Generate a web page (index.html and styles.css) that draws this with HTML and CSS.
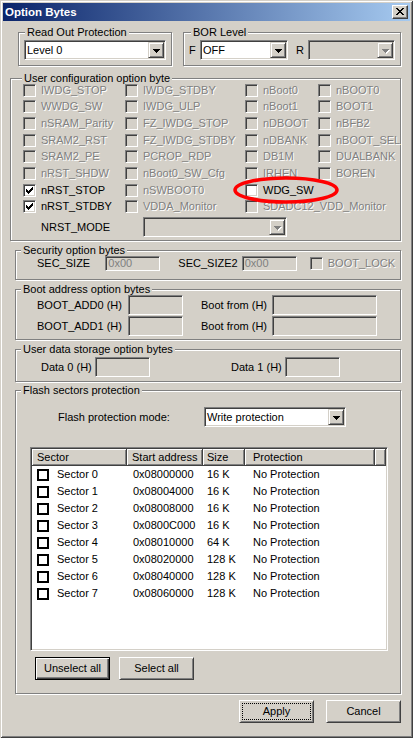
FILE: index.html
```html
<!DOCTYPE html>
<html>
<head>
<meta charset="utf-8">
<title>Option Bytes</title>
<link rel="stylesheet" href="styles.css">
</head>
<body>
<div class="window">
  <div class="titlebar">
    <span class="title">Option Bytes</span>
    <span class="close"><svg width="8" height="7" viewBox="0 0 8 7"><path d="M0 0h2v1H0zM6 0h2v1H6zM1 1h2v1H1zM5 1h2v1H5zM2 2h4v1H2zM3 3h2v1H3zM2 4h4v1H2zM1 5h2v1H1zM5 5h2v1H5zM0 6h2v1H0zM6 6h2v1H6z"/></svg></span>
  </div>
  <div class="content">
    <div class="row1">
      <fieldset class="group g-rop">
        <legend>Read Out Protection</legend>
        <div class="combo"><span class="val">Level 0</span><span class="dd"><svg width="7" height="4" viewBox="0 0 7 4"><path d="M0 0h7v1H0zM1 1h5v1H1zM2 2h3v1H2zM3 3h1v1H3z"/></svg></span></div>
      </fieldset>
      <fieldset class="group g-bor">
        <legend>BOR Level</legend>
        <div class="bor-row">
          <span class="lbl-f">F</span>
          <div class="combo w-f"><span class="val">OFF</span><span class="dd"><svg width="7" height="4" viewBox="0 0 7 4"><path d="M0 0h7v1H0zM1 1h5v1H1zM2 2h3v1H2zM3 3h1v1H3z"/></svg></span></div>
          <span class="lbl-r">R</span>
          <div class="combo w-r dis"><span class="val"></span><span class="dd"><svg width="8" height="5" viewBox="0 0 8 5"><path fill="#fff" d="M1 1h7v1H1zM2 2h5v1H2zM3 3h3v1H3zM4 4h1v1H4z"/><path fill="#808080" d="M0 0h7v1H0zM1 1h5v1H1zM2 2h3v1H2zM3 3h1v1H3z"/></svg></span></div>
        </div>
      </fieldset>
    </div>

    <fieldset class="group g-user">
      <legend>User configuration option byte</legend>
      <div class="opts">
        <div class="opt"><span class="cb dis"></span><span class="dt">IWDG_STOP</span></div>
        <div class="opt"><span class="cb dis"></span><span class="dt">IWDG_STDBY</span></div>
        <div class="opt"><span class="cb dis"></span><span class="dt">nBoot0</span></div>
        <div class="opt"><span class="cb dis"></span><span class="dt">nBOOT0</span></div>

        <div class="opt"><span class="cb dis"></span><span class="dt">WWDG_SW</span></div>
        <div class="opt"><span class="cb dis"></span><span class="dt">IWDG_ULP</span></div>
        <div class="opt"><span class="cb dis"></span><span class="dt">nBoot1</span></div>
        <div class="opt"><span class="cb dis"></span><span class="dt">BOOT1</span></div>

        <div class="opt"><span class="cb dis"></span><span class="dt">nSRAM_Parity</span></div>
        <div class="opt"><span class="cb dis"></span><span class="dt">FZ_IWDG_STOP</span></div>
        <div class="opt"><span class="cb dis"></span><span class="dt">nDBOOT</span></div>
        <div class="opt"><span class="cb dis"></span><span class="dt">nBFB2</span></div>

        <div class="opt"><span class="cb dis"></span><span class="dt">SRAM2_RST</span></div>
        <div class="opt"><span class="cb dis"></span><span class="dt">FZ_IWDG_STDBY</span></div>
        <div class="opt"><span class="cb dis"></span><span class="dt">nDBANK</span></div>
        <div class="opt"><span class="cb dis"></span><span class="dt">nBOOT_SEL</span></div>

        <div class="opt"><span class="cb dis"></span><span class="dt">SRAM2_PE</span></div>
        <div class="opt"><span class="cb dis"></span><span class="dt">PCROP_RDP</span></div>
        <div class="opt"><span class="cb dis"></span><span class="dt">DB1M</span></div>
        <div class="opt"><span class="cb dis"></span><span class="dt">DUALBANK</span></div>

        <div class="opt"><span class="cb dis"></span><span class="dt">nRST_SHDW</span></div>
        <div class="opt"><span class="cb dis"></span><span class="dt">nBoot0_SW_Cfg</span></div>
        <div class="opt"><span class="cb dis"></span><span class="dt">IRHEN</span></div>
        <div class="opt"><span class="cb dis"></span><span class="dt">BOREN</span></div>

        <div class="opt"><span class="cb"><svg width="7" height="7" viewBox="0 0 7 7"><path d="M6 0h1v1H6zM5 1h2v1H5zM0 2h1v1H0zM4 2h3v1H4zM0 3h2v1H0zM3 3h3v1H3zM0 4h5v1H0zM1 5h3v1H1zM2 6h1v1H2z"/></svg></span><span>nRST_STOP</span></div>
        <div class="opt"><span class="cb dis"></span><span class="dt">nSWBOOT0</span></div>
        <div class="opt annot"><span class="cb"></span><span>WDG_SW</span><svg class="ring" width="106" height="28" viewBox="0 0 106 28"><ellipse cx="53" cy="14" rx="51" ry="12" fill="none" stroke="#ff0000" stroke-width="3.5"/></svg></div>
        <div class="opt"></div>

        <div class="opt"><span class="cb"><svg width="7" height="7" viewBox="0 0 7 7"><path d="M6 0h1v1H6zM5 1h2v1H5zM0 2h1v1H0zM4 2h3v1H4zM0 3h2v1H0zM3 3h3v1H3zM0 4h5v1H0zM1 5h3v1H1zM2 6h1v1H2z"/></svg></span><span>nRST_STDBY</span></div>
        <div class="opt"><span class="cb dis"></span><span class="dt">VDDA_Monitor</span></div>
        <div class="opt"><span class="cb dis"></span><span class="dt">SDADC12_VDD_Monitor</span></div>
        <div class="opt"></div>
      </div>
      <div class="nrst">
        <span class="l-nrst">NRST_MODE</span>
        <div class="combo w-nrst dis"><span class="val"></span><span class="dd"><svg width="8" height="5" viewBox="0 0 8 5"><path fill="#fff" d="M1 1h7v1H1zM2 2h5v1H2zM3 3h3v1H3zM4 4h1v1H4z"/><path fill="#808080" d="M0 0h7v1H0zM1 1h5v1H1zM2 2h3v1H2zM3 3h1v1H3z"/></svg></span></div>
      </div>
    </fieldset>

    <fieldset class="group g-sec">
      <legend>Security option bytes</legend>
      <div class="sec-row">
        <span class="l-sec1">SEC_SIZE</span>
        <span class="edit sm">0x00</span>
        <span class="l-sec2">SEC_SIZE2</span>
        <span class="edit sm">0x00</span>
        <span class="cb dis bl"></span>
        <span class="dt">BOOT_LOCK</span>
      </div>
    </fieldset>

    <fieldset class="group g-boot">
      <legend>Boot address option bytes</legend>
      <div class="boot-rows">
        <div class="boot-row">
          <span class="l-boot">BOOT_ADD0 (H)</span>
          <span class="edit w55"></span>
          <span class="l-from">Boot from (H)</span>
          <span class="edit w105"></span>
        </div>
        <div class="boot-row">
          <span class="l-boot">BOOT_ADD1 (H)</span>
          <span class="edit w55"></span>
          <span class="l-from">Boot from (H)</span>
          <span class="edit w105"></span>
        </div>
      </div>
    </fieldset>

    <fieldset class="group g-data">
      <legend>User data storage option bytes</legend>
      <div class="data-row">
        <span class="l-d0">Data 0 (H)</span>
        <span class="edit w55"></span>
        <span class="l-d1">Data 1 (H)</span>
        <span class="edit w55"></span>
      </div>
    </fieldset>

    <fieldset class="group g-flash">
      <legend>Flash sectors protection</legend>
      <div class="mode-row">
        <span class="l-mode">Flash protection mode:</span>
        <div class="combo w-mode"><span class="val">Write protection</span><span class="dd"><svg width="7" height="4" viewBox="0 0 7 4"><path d="M0 0h7v1H0zM1 1h5v1H1zM2 2h3v1H2zM3 3h1v1H3z"/></svg></span></div>
      </div>
      <div class="list">
        <div class="lv-head">
          <span class="h1">Sector</span><span class="h2">Start address</span><span class="h3">Size</span><span class="h4">Protection</span><span class="h5"></span>
        </div>
        <div class="lv-row"><span class="c1"><span class="lcb"></span>Sector 0</span><span class="c2">0x08000000</span><span class="c3">16 K</span><span class="c4">No Protection</span></div>
        <div class="lv-row"><span class="c1"><span class="lcb"></span>Sector 1</span><span class="c2">0x08004000</span><span class="c3">16 K</span><span class="c4">No Protection</span></div>
        <div class="lv-row"><span class="c1"><span class="lcb"></span>Sector 2</span><span class="c2">0x08008000</span><span class="c3">16 K</span><span class="c4">No Protection</span></div>
        <div class="lv-row"><span class="c1"><span class="lcb"></span>Sector 3</span><span class="c2">0x0800C000</span><span class="c3">16 K</span><span class="c4">No Protection</span></div>
        <div class="lv-row"><span class="c1"><span class="lcb"></span>Sector 4</span><span class="c2">0x08010000</span><span class="c3">64 K</span><span class="c4">No Protection</span></div>
        <div class="lv-row"><span class="c1"><span class="lcb"></span>Sector 5</span><span class="c2">0x08020000</span><span class="c3">128 K</span><span class="c4">No Protection</span></div>
        <div class="lv-row"><span class="c1"><span class="lcb"></span>Sector 6</span><span class="c2">0x08040000</span><span class="c3">128 K</span><span class="c4">No Protection</span></div>
        <div class="lv-row"><span class="c1"><span class="lcb"></span>Sector 7</span><span class="c2">0x08060000</span><span class="c3">128 K</span><span class="c4">No Protection</span></div>
      </div>
      <div class="list-btns">
        <button class="btn default">Unselect all</button>
        <button class="btn">Select all</button>
      </div>
    </fieldset>

    <div class="footer">
      <button class="btn focus"><span class="fr">Apply</span></button>
      <button class="btn">Cancel</button>
    </div>
  </div>
</div>
</body>
</html>
```

FILE: styles.css
```css
* { box-sizing: border-box; }
html, body { margin: 0; padding: 0; }
body {
  width: 413px; height: 738px; overflow: hidden;
  background: #d4d0c8;
  font-family: "Liberation Sans", Arial, sans-serif;
  font-size: 11px; line-height: 13px; color: #000;
}
.window {
  width: 413px; height: 738px; padding: 3px;
  background: #d4d0c8;
  box-shadow: inset 1px 1px 0 #d4d0c8, inset -1px -1px 0 #404040, inset 2px 2px 0 #fff, inset -2px -2px 0 #808080;
  display: flex; flex-direction: column;
}
.titlebar {
  height: 18px; flex: none;
  display: flex; align-items: center; justify-content: space-between;
  padding: 0 2px;
  background: linear-gradient(to right, #0a246a, #a6caf0);
}
.title { color: #fff; font-weight: bold; font-size: 11.5px; line-height: 14px; }
.close {
  width: 16px; height: 14px; padding: 2px 0 0 3px;
  background: #d4d0c8;
  border: 1px solid; border-color: #fff #404040 #404040 #fff;
  box-shadow: inset -1px -1px 0 #808080;
}
.close svg { display: block; }
.content { flex: 1; display: flex; flex-direction: column; padding: 0 9px 0 7px; }

/* group boxes */
.group {
  margin: 0; padding: 0 5px; min-width: 0;
  border: 1px solid #808080;
  box-shadow: 1px 1px 0 #fff, inset 1px 1px 0 #fff;
}
.group > legend {
  padding: 0 2px; margin: 0; height: 13px; line-height: 13px;
  background: #d4d0c8; white-space: nowrap;
}
.row1 { display: flex; margin-top: 5px; }
.g-rop { margin-left: 8px; width: 154px; height: 40px; }
.g-rop > legend { margin-left: 1px; }
.g-rop .combo { margin-top: 1px; width: 142px; }
.g-bor { margin-left: 11px; width: 218px; height: 40px; }
.g-bor > legend { margin-left: 2px; }
.bor-row { display: flex; align-items: center; margin-top: 1px; }
.lbl-f { width: 11px; }
.lbl-r { width: 12px; margin-left: 8px; }
.w-f { width: 88px; }
.w-r { width: 87px; }

.g-user { margin-top: 6px; width: 391px; height: 169px; }
.g-user > legend { margin-left: 6px; }
.opts {
  display: grid;
  grid-template-columns: 102px 120px 73px 1fr;
  grid-template-rows: repeat(8, 16.667px);
  margin: -3px 0 0 7px;
}
.opt { display: flex; align-items: center; gap: 5px; white-space: nowrap; }
.annot { position: relative; }
.ring { position: absolute; left: -12px; top: -6px; }
.dt { color: #808080; text-shadow: 1px 1px 0 #fff; }
.nrst { display: flex; align-items: center; height: 20px; margin: 2px 0 0 7px; }
.l-nrst { width: 120px; padding-left: 18px; }
.w-nrst { width: 144px; }

.g-sec { margin: 3px 0 0 5px; width: 386px; height: 36px; }
.sec-row { display: flex; align-items: center; height: 15px; margin: -1px 0 0 16px; white-space: nowrap; }
.l-sec1 { width: 70px; }
.l-sec2 { width: 65px; margin-left: 18px; }
.sec-row .edit { width: 55px; }
.bl { margin: 0 5px 0 13px; }

.g-boot { margin: 3px 0 0 5px; width: 386px; height: 57px; }
.boot-rows { display: flex; flex-direction: column; gap: 1px; margin: -1px 0 0 16px; }
.boot-row { display: flex; align-items: center; height: 20px; white-space: nowrap; }
.l-boot { width: 91px; }
.l-from { width: 71px; margin-left: 18px; }
.w55 { width: 55px; }
.w105 { width: 105px; }

.g-data { margin: 3px 0 0 5px; width: 386px; height: 39px; }
.data-row { display: flex; align-items: center; height: 20px; margin: 1px 0 0 20px; white-space: nowrap; }
.l-d0 { width: 54px; }
.l-d1 { width: 54px; margin-left: 81px; }

.g-flash { margin: 2px 0 0 5px; width: 386px; height: 310px; }
.mode-row { display: flex; align-items: center; height: 20px; margin: 10px 0 0 37px; }
.l-mode { width: 146px; }
.w-mode { width: 142px; }

/* controls */
.combo {
  height: 20px; flex: none; display: flex; padding: 1px;
  border: 1px solid; border-color: #808080 #fff #fff #808080;
  box-shadow: inset 1px 1px 0 #404040, inset -1px -1px 0 #d4d0c8;
  background: #fff;
}
.combo.dis { background: #d4d0c8; }
.combo .val { flex: 1; padding-left: 1px; line-height: 16px; white-space: nowrap; overflow: hidden; }
.dd {
  width: 16px; height: 16px; flex: none; padding: 6px 0 0 4px;
  background: #d4d0c8;
  border: 1px solid; border-color: #d4d0c8 #404040 #404040 #d4d0c8;
  box-shadow: inset 1px 1px 0 #fff, inset -1px -1px 0 #808080;
}
.dd svg { display: block; }
.edit {
  height: 20px; flex: none; padding-left: 2px;
  display: flex; align-items: center;
  border: 1px solid; border-color: #808080 #fff #fff #808080;
  box-shadow: inset 1px 1px 0 #404040, inset -1px -1px 0 #d4d0c8;
  background: #d4d0c8; color: #808080;
}
.edit.sm { height: 15px; }
.cb {
  width: 13px; height: 13px; flex: none; padding: 2px;
  border: 1px solid; border-color: #808080 #fff #fff #808080;
  box-shadow: inset 1px 1px 0 #404040, inset -1px -1px 0 #d4d0c8;
  background: #fff;
}
.cb.dis { background: #d4d0c8; }
.cb svg { display: block; }

/* list view */
.list {
  margin: 20px 0 0 9px; width: 358px; height: 204px; padding: 1px;
  background: #fff;
  border: 1px solid; border-color: #808080 #fff #fff #808080;
  box-shadow: inset 1px 1px 0 #404040, inset -1px -1px 0 #d4d0c8;
  display: flex; flex-direction: column;
}
.lv-head, .lv-row { display: grid; grid-template-columns: 95px 76px 42px 130px 1fr; }
.lv-head { height: 17px; flex: none; }
.lv-head > span {
  background: #d4d0c8; line-height: 15px; white-space: nowrap; overflow: hidden;
  border-right: 1px solid #404040; border-bottom: 1px solid #404040;
  box-shadow: inset 1px 1px 0 #fff, inset -1px -1px 0 #808080;
  padding-top: 1px;
}
.h1, .h2 { padding-left: 5px; }
.h3 { padding-left: 4px; }
.h4 { padding-left: 8px; }
.lv-row { height: 17px; flex: none; align-items: center; white-space: nowrap; }
.c1 { display: flex; align-items: center; gap: 8px; padding-left: 5px; }
.c2 { padding-left: 6px; }
.c3 { padding-left: 4px; }
.c4 { padding-left: 8px; }
.lcb { width: 12px; height: 12px; border: 2px solid #000; background: #fff; flex: none; }

/* buttons */
.btn {
  width: 75px; height: 23px; margin: 0; padding: 0;
  font: inherit; color: #000; background: #d4d0c8;
  border: 1px solid; border-color: #fff #404040 #404040 #fff;
  box-shadow: inset 1px 1px 0 #d4d0c8, inset -1px -1px 0 #808080;
  display: flex; align-items: center; justify-content: center;
}
.btn.default {
  border-color: #000;
  box-shadow: inset 1px 1px 0 #fff, inset -1px -1px 0 #404040, inset -2px -2px 0 #808080;
}
.btn.focus { padding: 2px; align-items: stretch; }
.fr { flex: 1; border: 1px dotted #000; display: flex; align-items: center; justify-content: center; }
.list-btns { display: flex; gap: 9px; margin: 6px 0 0 14px; }
.footer { display: flex; justify-content: flex-end; gap: 12px; margin-top: 6px; }
```
